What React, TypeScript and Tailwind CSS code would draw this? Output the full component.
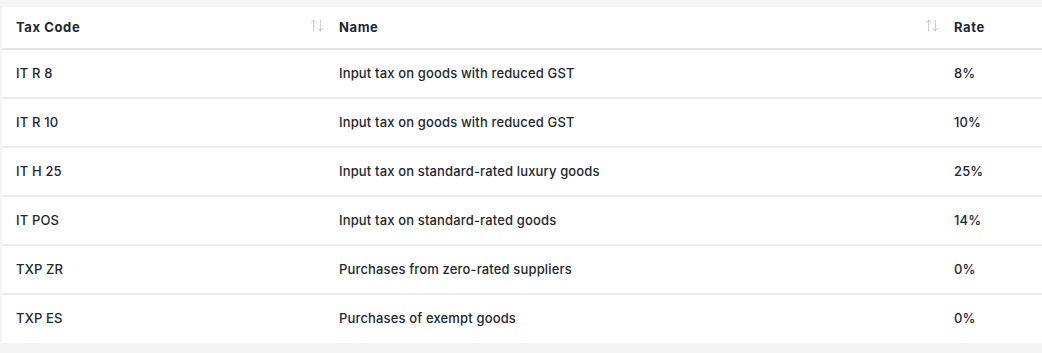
import { ArrowUpDown } from "lucide-react";

const rows = [
  { code: "IT R 8", name: "Input tax on goods with reduced GST", rate: "8%" },
  { code: "IT R 10", name: "Input tax on goods with reduced GST", rate: "10%" },
  { code: "IT H 25", name: "Input tax on standard-rated luxury goods", rate: "25%" },
  { code: "IT POS", name: "Input tax on standard-rated goods", rate: "14%" },
  { code: "TXP ZR", name: "Purchases from zero-rated suppliers", rate: "0%" },
  { code: "TXP ES", name: "Purchases of exempt goods", rate: "0%" },
];

function SortIcon() {
  return (
    <ArrowUpDown
      className="absolute right-0 top-1/2 h-[16px] w-[16px] -translate-y-[65%] text-[#c4c6c9]"
      strokeWidth={1.5}
    />
  );
}

export default function App() {
  return (
    <div className="min-h-screen bg-[#f5f5f5] pt-[7px] pl-[2px] font-['Inter','Liberation_Sans',sans-serif] text-[13px] font-medium tracking-[0.15px] text-[#23272e]">
      <div className="bg-white">
        <div className="grid h-[43px] grid-cols-[323px_615px_1fr] items-center border-b-2 border-[#e3e5e9] font-bold tracking-[0.6px]">
          <div className="relative flex h-full items-center pl-[14px]">
            Tax Code
            <SortIcon />
          </div>
          <div className="relative flex h-full items-center pl-[14px]">
            Name
            <SortIcon />
          </div>
          <div className="flex h-full items-center pl-[14px]">Rate</div>
        </div>
        {rows.map((r, i) => (
          <div
            key={i}
            className={
              i < rows.length - 1
                ? "grid h-[49px] grid-cols-[323px_615px_1fr] items-center border-b-2 border-[#ebecef]"
                : "grid h-[48px] grid-cols-[323px_615px_1fr] items-center"
            }
          >
            <div className="pl-[14px]">{r.code}</div>
            <div className="pl-[14px]">{r.name}</div>
            <div className="pl-[14px]">{r.rate}</div>
          </div>
        ))}
      </div>
    </div>
  );
}
